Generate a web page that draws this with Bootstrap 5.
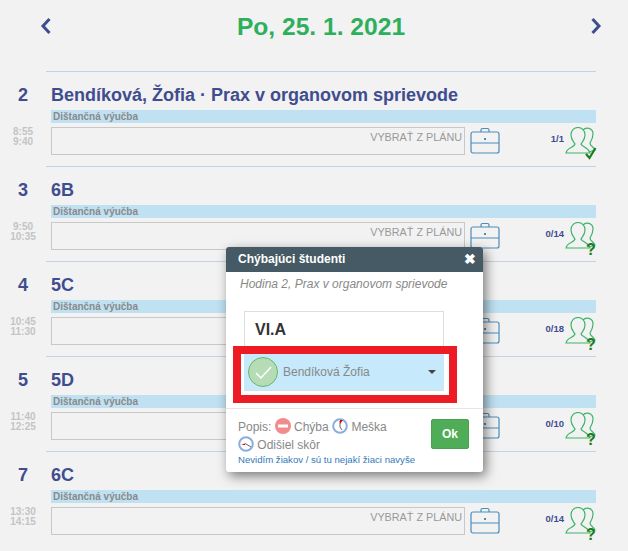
<!DOCTYPE html>
<html lang="sk">
<head>
    <meta charset="UTF-8">
    <meta name="viewport" content="width=device-width, initial-scale=1.0">
    <title>Rozvrh</title>
    <link rel="stylesheet" href="https://cdn.jsdelivr.net/npm/bootstrap@5.3.0/dist/css/bootstrap.min.css">
    <style>
        html, body { height: 551px; overflow: hidden; }
        body { background: #f2f2f2; font-family: "Liberation Sans", Arial, sans-serif; position: relative; }
        .day-head { height: 71px; padding: 12px 23px 0 37px; }
        .day-arrow { width: 16px; height: 30px; }
        .day-title { color: #2eaf5c; font-size: 24.6px; font-weight: 700; line-height: 30px; }
        .lesson { height: 95px; margin-left: 46px; width: 550px; border-top: 1px solid #c5d2e0; position: relative; }
        .lesson-no { position: absolute; left: -46px; top: 13px; width: 46px; text-align: center; color: #3f4d8f; font-size: 18px; font-weight: 700; line-height: 20px; }
        .lesson-time { position: absolute; left: -46px; top: 55px; width: 46px; text-align: center; color: #c4c4c4; font-size: 10px; font-weight: 700; line-height: 10px; }
        .lesson-name { color: #3f4d8f; font-size: 18px; font-weight: 700; line-height: 22px; padding: 12px 0 0 5px; height: 38px; white-space: nowrap; }
        .lesson-band { background: #bfe1f2; color: #8a8a8a; font-size: 10px; font-weight: 700; line-height: 13px; height: 13px; margin-left: 5px; padding-left: 2px; }
        .lesson-line { margin: 4px 0 0 5px; }
        .plan-box { width: 414px; height: 28px; flex: none; border: 1px solid #c8c8c8; color: #999; font-size: 10.8px; line-height: 11px; text-align: right; padding: 4px 2px 0 0; }
        .case-ico { width: 30px; height: 28px; margin-left: 5px; flex: none; }
        .count-box { width: 96px; flex: none; justify-content: flex-end; }
        .count-txt { color: #3f4d8f; font-size: 9.5px; font-weight: 700; margin-right: 1px; margin-top: 5px; line-height: 14px; }
        .people-ico { width: 32px; height: 38px; flex: none; margin-right: -1px; }
        .miss-modal { position: absolute; left: 226px; top: 247px; width: 257px; height: 225px; background: #fff; border-radius: 3px; box-shadow: 3px 4px 12px rgba(0,0,0,.5); }
        .miss-head { background: #455a64; color: #fff; height: 25px; font-size: 12px; font-weight: 700; line-height: 25px; padding: 0 7px 0 12px; border-radius: 3px 3px 0 0; }
        .miss-x { font-size: 14px; line-height: 25px; }
        .miss-sub { color: #888; font-size: 12px; font-style: italic; line-height: 14px; padding: 5px 0 0 14px; }
        .class-box { margin: 20px 0 0 18px; width: 200px; height: 80px; border: 1px solid #ddd; border-bottom: 0; }
        .class-name { color: #333; font-size: 16px; font-weight: 700; line-height: 20px; padding: 8px 0 0 10px; height: 42px; }
        .pupil-row { position: relative; height: 37px; margin: 0 -1px; background: #c6e9fb; border-bottom: 1px solid #ddd; padding-left: 4px; color: #888; font-size: 12px; }
        .pupil-tick { width: 30px; height: 30px; margin-right: 5px; }
        .pupil-caret { margin-left: auto; margin-right: 8px; width: 0; height: 0; border-left: 4px solid transparent; border-right: 4px solid transparent; border-top: 4px solid #444; }
        .red-frame { position: absolute; left: 7px; top: 99px; width: 224px; height: 57px; border: 8px solid #ed1c24; }
        .miss-foot { margin-top: 17px; border-top: 1px solid #e5e5e5; padding: 9px 14px 0 12px; color: #888; font-size: 12px; line-height: 17px; }
        .legend-ico { width: 16px; height: 16px; vertical-align: -3px; }
        .miss-link { color: #337ab7; font-size: 9.6px; line-height: 11px; white-space: nowrap; }
        .ok-btn { background: #4fad58; border: 1px solid #4a9f52; color: #fff; width: 38px; height: 30px; padding: 0; font-size: 12px; font-weight: 700; border-radius: 2px; margin-top: 1px; flex: none; }
    </style>
</head>
<body>
    <svg width="0" height="0" class="position-absolute">
        <symbol id="case" viewBox="0 0 30 28">
            <g fill="none" stroke="#4a8dbb" stroke-width="1.2">
                <rect x="1" y="5" width="28" height="21" rx="2"/>
                <path d="M1 16H29M11 5V3q0-1.500 1.500-1.500h5Q19 1.500 19 3V5"/>
            </g>
            <rect x="14" y="11" width="2" height="2" fill="#4a8dbb"/>
        </symbol>
        <symbol id="people" viewBox="0 0 32 38">
            <g fill="none" stroke="#3cb56b" stroke-width="1.2">
                <path d="M18 3c3-3.500 10-2 10 4 0 4-2 7-3 9 0 3 3 3 5 7l-6 2"/>
                <path d="M1 26c1-6 8-5 9-9-1-2-4-4-4-9 0-10 14-10 14 0 0 5-3 7-4 9 1 3 7 3 9 9z"/>
            </g>
        </symbol>
    </svg>

    <div class="day-head d-flex justify-content-between align-items-start">
        <svg class="day-arrow" viewBox="0 0 16 30"><path d="M12.500 7 L6 14 L12.500 21" fill="none" stroke="#3f4d8f" stroke-width="3"/></svg>
        <div class="day-title">Po, 25. 1. 2021</div>
        <svg class="day-arrow" viewBox="0 0 16 30"><path d="M3.500 7 L10 14 L3.500 21" fill="none" stroke="#3f4d8f" stroke-width="3"/></svg>
    </div>

    <div id="lessons"></div>

    <div class="miss-modal">
        <div class="miss-head d-flex justify-content-between">
            <span>Chýbajúci študenti</span>
            <span class="miss-x">✖</span>
        </div>
        <div class="miss-sub">Hodina 2, Prax v organovom sprievode</div>
        <div class="class-box">
            <div class="class-name">VI.A</div>
            <div class="pupil-row d-flex align-items-center">
                <svg class="pupil-tick" viewBox="0 0 30 30"><circle cx="15" cy="15" r="14.500" fill="#b5dcb5" stroke="#6cb56c"/><path d="M8 16l5 5 10-11" fill="none" stroke="#fff" stroke-width="1.500"/></svg>
                <span>Bendíková Žofia</span>
                <span class="pupil-caret"></span>
            </div>
        </div>
        <div class="red-frame"></div>
        <div class="miss-foot d-flex justify-content-between">
            <div>
                <div>Popis:
                    <svg class="legend-ico" viewBox="0 0 16 16"><circle cx="8" cy="8" r="8" fill="#f28b8b"/><rect x="3" y="6.500" width="10" height="3" fill="#fff"/></svg> Chýba
                    <svg class="legend-ico" viewBox="0 0 16 16"><circle cx="8" cy="8" r="6.800" fill="#fff" stroke="#8aaede" stroke-width="2"/><path d="M8 3V9L10 12" fill="none" stroke="#666"/><path d="M8 2h3l-3 4z" fill="#e00"/></svg> Meška
                </div>
                <div><svg class="legend-ico" viewBox="0 0 16 16"><circle cx="8" cy="8" r="6.800" fill="#fff" stroke="#8aaede" stroke-width="2"/><path d="M8 8L13 11" fill="none" stroke="#666"/><path d="M3 9l5-2-1 2z" fill="#e00"/></svg> Odišiel skôr</div>
                <div class="miss-link">Nevidím žiakov / sú tu nejakí žiaci navyše</div>
            </div>
            <button class="btn ok-btn">Ok</button>
        </div>
    </div>

    <script>
        var lessons = [
            { no: 2, name: "Bendíková, Žofia · Prax v organovom sprievode", from: "8:55", to: "9:40", count: "1/1", done: true },
            { no: 3, name: "6B", from: "9:50", to: "10:35", count: "0/14" },
            { no: 4, name: "5C", from: "10:45", to: "11:30", count: "0/18" },
            { no: 5, name: "5D", from: "11:40", to: "12:25", count: "0/10" },
            { no: 7, name: "6C", from: "13:30", to: "14:15", count: "0/14" }
        ];
        document.getElementById("lessons").innerHTML = lessons.map(function (l) {
            var mark = l.done
                ? '<path d="M21 27l3.500 4 6-10" fill="none" stroke="#1d7a1d" stroke-width="2.200"/>'
                : '<text x="21" y="33" font-size="16" font-weight="700" fill="#1d7a1d" font-family="Liberation Sans">?</text>';
            return `<div class="lesson">
                <div class="lesson-no">${l.no}</div>
                <div class="lesson-time">${l.from}<br>${l.to}</div>
                <div class="lesson-name">${l.name}</div>
                <div class="lesson-band">Dištančná výučba</div>
                <div class="lesson-line d-flex">
                    <div class="plan-box">VYBRAŤ Z PLÁNU</div>
                    <svg class="case-ico"><use href="#case"/></svg>
                    <div class="count-box d-flex">
                        <span class="count-txt">${l.count}</span>
                        <svg class="people-ico" viewBox="0 0 32 38"><use href="#people"/>${mark}</svg>
                    </div>
                </div>
            </div>`;
        }).join("");
    </script>
    <script src="https://cdn.jsdelivr.net/npm/bootstrap@5.3.0/dist/js/bootstrap.bundle.min.js"></script>
</body>
</html>
